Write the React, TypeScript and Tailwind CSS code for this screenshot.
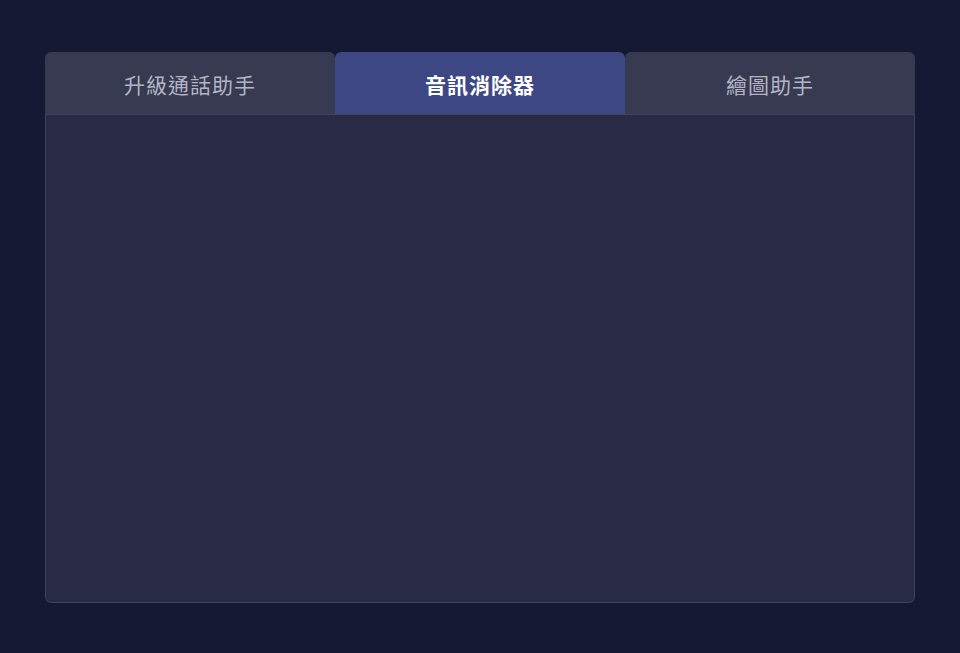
import React, { useState } from 'react'

const tabs = ['升級通話助手', '音訊消除器', '繪圖助手']

export default function App() {
    const [active, setActive] = useState(1)

    return (
        <div
            className="min-h-[653px] w-full bg-[#151933] pt-[52px]"
            style={{ fontFamily: '"Noto Sans CJK TC", "Noto Sans", sans-serif' }}
        >
            <div className="mx-[45px] w-[870px]">
                {/* Tabs */}
                <div className="flex h-[62px]">
                    {tabs.map((label, i) => (
                        <button
                            key={label}
                            onClick={() => setActive(i)}
                            className={`flex flex-1 items-center justify-center rounded-t-md pt-[3px] text-[21px] tracking-[1px] ${active === i
                                    ? 'bg-[#3d4784] font-bold text-white'
                                    : 'bg-[#373a51] text-[#b3b5c4]'
                                }`}
                        >
                            {label}
                        </button>
                    ))}
                </div>

                {/* Panel */}
                <div className="h-[489px] rounded-b-md border border-[#3f4260] bg-[#292b46]" />
            </div>
        </div>
    )
}
